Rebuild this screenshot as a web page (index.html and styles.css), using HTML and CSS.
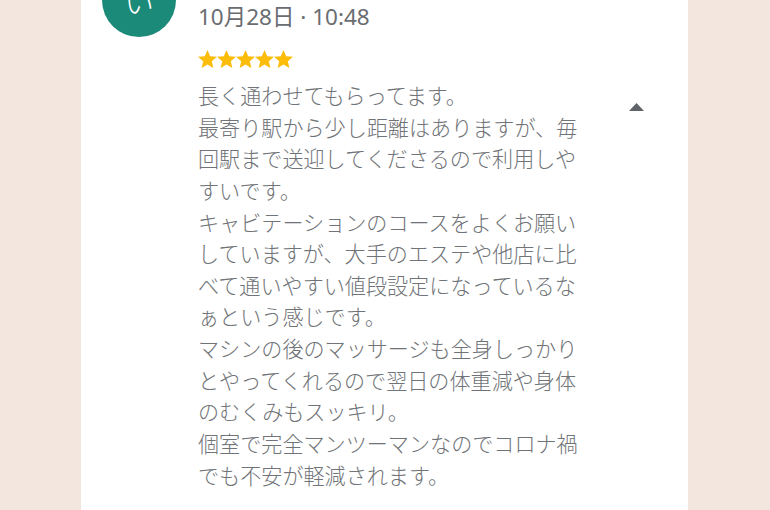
FILE: index.html
```html
<!DOCTYPE html>
<html lang="ja">
  <head>
    <meta charset="UTF-8" />
    <meta name="viewport" content="width=device-width, initial-scale=1.0" />
    <title>口コミ</title>
    <link rel="stylesheet" href="styles.css">
  </head>
  <body>
    <div id="page">
      <div class="card">
        <div class="review">
          <div class="avatar">い</div>
          <div class="review-main">
            <div class="review-date">10月28日 · 10:48</div>
            <div class="stars">
              <svg viewBox="2 2 20 19" width="19" height="18"><path d="M12 17.27L18.18 21l-1.64-7.03L22 9.24l-7.19-.61L12 2 9.19 8.63 2 9.24l5.46 4.73L5.82 21z" /></svg>
              <svg viewBox="2 2 20 19" width="19" height="18"><path d="M12 17.27L18.18 21l-1.64-7.03L22 9.24l-7.19-.61L12 2 9.19 8.63 2 9.24l5.46 4.73L5.82 21z" /></svg>
              <svg viewBox="2 2 20 19" width="19" height="18"><path d="M12 17.27L18.18 21l-1.64-7.03L22 9.24l-7.19-.61L12 2 9.19 8.63 2 9.24l5.46 4.73L5.82 21z" /></svg>
              <svg viewBox="2 2 20 19" width="19" height="18"><path d="M12 17.27L18.18 21l-1.64-7.03L22 9.24l-7.19-.61L12 2 9.19 8.63 2 9.24l5.46 4.73L5.82 21z" /></svg>
              <svg viewBox="2 2 20 19" width="19" height="18"><path d="M12 17.27L18.18 21l-1.64-7.03L22 9.24l-7.19-.61L12 2 9.19 8.63 2 9.24l5.46 4.73L5.82 21z" /></svg>
            </div>
            <div class="review-body">
              <p class="review-text">長く通わせてもらってます。<br>最寄り駅から少し距離はありますが、毎回駅まで送迎してくださるので利用しやすいです。<br>キャビテーションのコースをよくお願いしていますが、大手のエステや他店に比べて通いやすい値段設定になっているなぁという感じです。<br>マシンの後のマッサージも全身しっかりとやってくれるので翌日の体重減や身体のむくみもスッキリ。<br>個室で完全マンツーマンなのでコロナ禍でも不安が軽減されます。</p>
              <button class="collapse" aria-label="閉じる">
                <svg viewBox="0 0 15 8" width="15" height="8"><path d="M0 8 L7.5 0 L15 8 Z" /></svg>
              </button>
            </div>
          </div>
        </div>
      </div>
    </div>
  </body>
</html>
```

FILE: styles.css
```css
body {
  margin: 0;
  background-color: #f3e6de;
  font-family: "Noto Sans CJK JP", "Noto Sans", sans-serif;
  overflow: hidden;
}

#page {
  display: flex;
  height: 100vh;
}

.card {
  margin-left: 81px;
  width: 607px;
  background-color: #ffffff;
}

.review {
  display: flex;
  margin-top: -37px;
  padding-left: 21px;
  padding-right: 44px;
}

.avatar {
  flex: none;
  width: 74px;
  height: 74px;
  border-radius: 50%;
  background-color: #1b8a79;
  color: #ffffff;
  font-size: 30px;
  font-weight: 300;
  display: flex;
  align-items: center;
  justify-content: center;
}

.review-main {
  flex-grow: 1;
  margin-left: 22px;
  padding-top: 39px;
}

.review-date {
  font-family: "Noto Sans", "Noto Sans CJK JP", sans-serif;
  font-size: 22.5px;
  line-height: 30px;
  color: #6a6d71;
}

.stars {
  display: flex;
  margin-top: 18px;
  height: 18px;
}

.stars svg {
  fill: #fbbc0a;
}

.review-body {
  display: flex;
  justify-content: space-between;
  align-items: flex-start;
  margin-top: 12px;
}

.review-text {
  margin: 0;
  width: 385px;
  font-size: 21.1px;
  font-weight: 300;
  line-height: 1.5;
  color: #707377;
  line-break: anywhere;
}

.collapse {
  background: transparent;
  border: none;
  padding: 0;
  margin-top: 23px;
  display: flex;
}

.collapse svg {
  fill: #5f6368;
}
```
